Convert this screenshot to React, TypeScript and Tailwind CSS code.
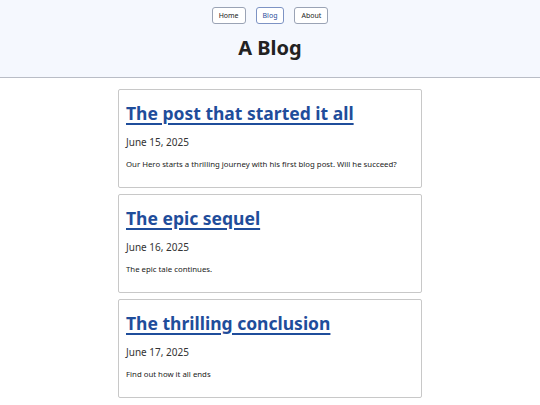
const posts = [
  {
    title: 'The post that started it all',
    date: 'June 15, 2025',
    body: 'Our Hero starts a thrilling journey with his first blog post. Will he succeed?',
  },
  { title: 'The epic sequel', date: 'June 16, 2025', body: 'The epic tale continues.' },
  { title: 'The thrilling conclusion', date: 'June 17, 2025', body: 'Find out how it all ends' },
];

const NavButton = ({ label, active }: { label: string; active?: boolean }) => (
  <a
    href="#"
    className={
      active
        ? 'rounded-[3px] border border-[#7d93c4] bg-white px-[6px] py-[3px] text-[7px] leading-[9px] text-[#1f4d9b]'
        : 'rounded-[3px] border border-[#9aa3b5] bg-white px-[6px] py-[3px] text-[7px] leading-[9px] text-[#222]'
    }
  >
    {label}
  </a>
);

const App = () => (
  <div className="min-h-[405px] bg-white text-[#222]" style={{ fontFamily: '"Noto Sans", sans-serif' }}>
    <header className="flex h-[78px] flex-col items-center border-b border-[#b9bdc6] bg-[#f5f8fe] pt-[7px]">
      <nav className="flex gap-[10px]">
        <NavButton label="Home" />
        <NavButton label="Blog" active />
        <NavButton label="About" />
      </nav>
      <h1 className="mt-[10px] text-[20px] font-bold leading-[28px] text-[#222]">A Blog</h1>
    </header>

    <main className="mx-auto mt-[11px] flex w-[304px] flex-col gap-[6px]">
      {posts.map((p) => (
        <article key={p.title} className="h-[99px] rounded-[2px] border border-[#c8c8c8] px-[7px] pt-[10px]">
          <h2 className="text-[17.5px] font-bold leading-[26px]">
            <a href="#" className="text-[#1f4d9b] underline decoration-[1.5px] underline-offset-[3px]">
              {p.title}
            </a>
          </h2>
          <p className="mt-[10px] text-[10px] leading-[12px] text-[#333]">{p.date}</p>
          <p className="mt-[10px] text-[7.8px] leading-[12px]">{p.body}</p>
        </article>
      ))}
    </main>
  </div>
);

export default App;
